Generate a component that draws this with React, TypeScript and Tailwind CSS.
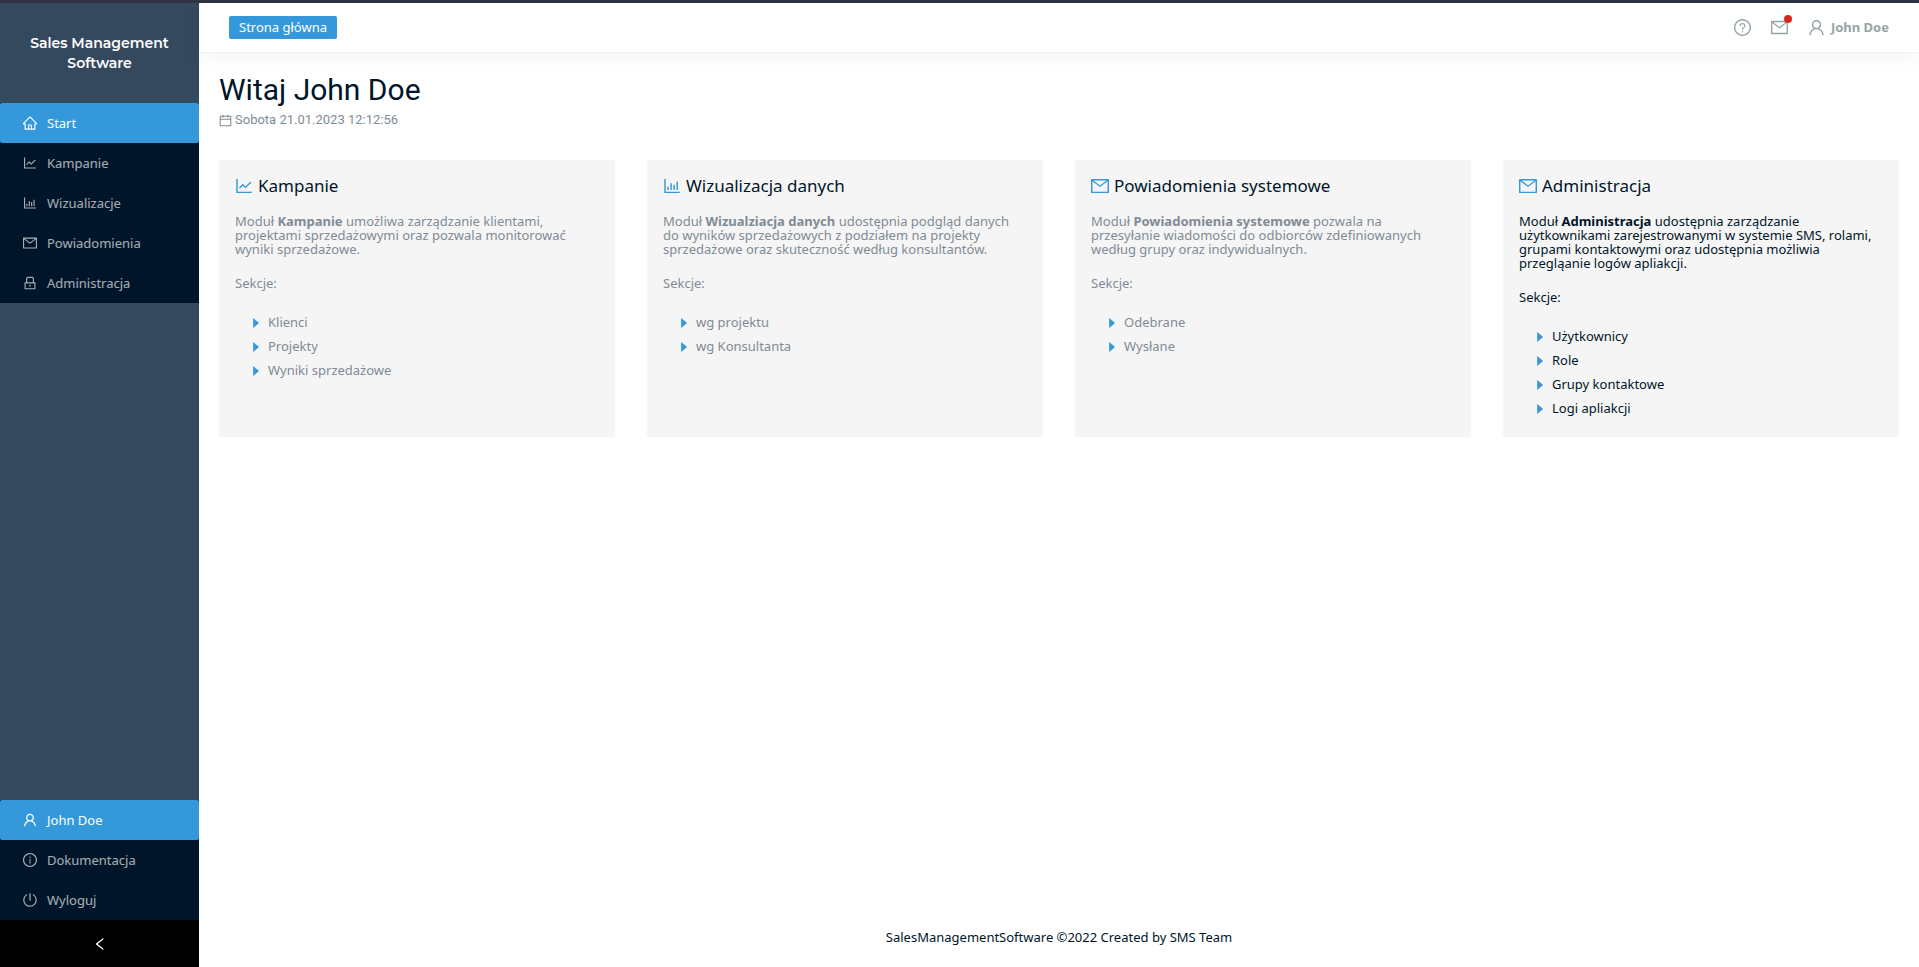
import React from "react";
import {
  AiOutlineBarChart,
  AiOutlineCalendar,
  AiOutlineHome,
  AiOutlineInfoCircle,
  AiOutlineLeft,
  AiOutlineLineChart,
  AiOutlineLock,
  AiOutlineMail,
  AiOutlinePoweroff,
  AiOutlineQuestionCircle,
  AiOutlineUser,
  AiFillCaretRight,
} from "react-icons/ai";
import type { IconType } from "react-icons";

type MenuEntry = { label: string; icon: IconType; active?: boolean };

const mainMenu: MenuEntry[] = [
  { label: "Start", icon: AiOutlineHome, active: true },
  { label: "Kampanie", icon: AiOutlineLineChart },
  { label: "Wizualizacje", icon: AiOutlineBarChart },
  { label: "Powiadomienia", icon: AiOutlineMail },
  { label: "Administracja", icon: AiOutlineLock },
];

const userMenu: MenuEntry[] = [
  { label: "John Doe", icon: AiOutlineUser, active: true },
  { label: "Dokumentacja", icon: AiOutlineInfoCircle },
  { label: "Wyloguj", icon: AiOutlinePoweroff },
];

type Module = {
  title: string;
  name: string;
  text: string;
  icon: IconType;
  sections: string[];
  dark?: boolean;
};

const modules: Module[] = [
  {
    title: "Kampanie",
    name: "Kampanie",
    text: "umożliwa zarządzanie klientami, projektami sprzedażowymi oraz pozwala monitorować wyniki sprzedażowe.",
    icon: AiOutlineLineChart,
    sections: ["Klienci", "Projekty", "Wyniki sprzedażowe"],
  },
  {
    title: "Wizualizacja danych",
    name: "Wizualziacja danych",
    text: "udostępnia podgląd danych do wyników sprzedażowych z podziałem na projekty sprzedażowe oraz skuteczność według konsultantów.",
    icon: AiOutlineBarChart,
    sections: ["wg projektu", "wg Konsultanta"],
  },
  {
    title: "Powiadomienia systemowe",
    name: "Powiadomienia systemowe",
    text: "pozwala na przesyłanie wiadomości do odbiorców zdefiniowanych według grupy oraz indywidualnych.",
    icon: AiOutlineMail,
    sections: ["Odebrane", "Wysłane"],
  },
  {
    title: "Administracja",
    name: "Administracja",
    text: "udostępnia zarządzanie użytkownikami zarejestrowanymi w systemie SMS, rolami, grupami kontaktowymi oraz udostępnia możliwia przegląanie logów apliakcji.",
    icon: AiOutlineMail,
    sections: ["Użytkownicy", "Role", "Grupy kontaktowe", "Logi apliakcji"],
    dark: true,
  },
];

/* The glyphs leave a 64-unit margin in their 1024 grid; crop it away. */
function Icon({ of: Glyph, size, className }: { of: IconType; size: number; className?: string }) {
  return <Glyph size={size} viewBox="64 64 896 896" className={className} aria-hidden="true" />;
}

function Menu({ items, label }: { items: MenuEntry[]; label: string }) {
  return (
    <nav aria-label={label} className="bg-[#001529]">
      <ul>
        {items.map((item) => (
          <li key={item.label}>
            <a
              href="#"
              className={
                item.active
                  ? "flex h-10 items-center gap-2.5 rounded-xs bg-[#3498db] pl-[23px] text-white"
                  : "flex h-10 items-center gap-2.5 pl-[23px] text-white/65"
              }
            >
              <Icon of={item.icon} size={14} />
              <span className="leading-5">{item.label}</span>
            </a>
          </li>
        ))}
      </ul>
    </nav>
  );
}

function ModuleCard({ module }: { module: Module }) {
  return (
    <section
      className={
        module.dark
          ? "rounded-xs bg-[#f5f5f5] p-4 text-[#001529]"
          : "rounded-xs bg-[#f5f5f5] p-4 text-[#808b96]"
      }
    >
      <h2 className="flex h-5 items-center gap-[5px] text-[17px] text-[#001529]">
        <Icon of={module.icon} size={18} className="text-[#3498db]" />
        {module.title}
      </h2>
      <p className="mt-[18px] pr-1 leading-[14px]">
        Moduł <strong className="font-bold">{module.name}</strong> {module.text}
      </p>
      <p className="mt-5 leading-[14px]">Sekcje:</p>
      <ul className="mt-[21px] pl-[15px]">
        {module.sections.map((s) => (
          <li key={s} className="flex h-6 items-center gap-1.5">
            <Icon of={AiFillCaretRight} size={12} className="text-[#3498db]" />
            <a href="#">{s}</a>
          </li>
        ))}
      </ul>
    </section>
  );
}

export default function App() {
  return (
    <div className="flex min-h-screen flex-col border-t-[3px] border-[#2f3342] bg-white font-['Noto_Sans','Open_Sans',sans-serif] text-[13px] text-[#001529]">
      <div className="flex flex-1">
        <aside className="flex w-[199px] shrink-0 flex-col bg-[#34495e]">
          <div className="flex h-[100px] items-center justify-center px-6 text-center font-['Montserrat','Inter',sans-serif] text-sm leading-5 font-semibold text-white">
            Sales Management Software
          </div>
          <Menu items={mainMenu} label="Menu główne" />
          <div className="mt-auto">
            <Menu items={userMenu} label="Menu użytkownika" />
            <button
              type="button"
              aria-label="Zwiń menu"
              className="flex h-[47px] w-full items-center justify-center bg-black text-white"
            >
              <Icon of={AiOutlineLeft} size={14} />
            </button>
          </div>
        </aside>

        <div className="flex min-w-0 flex-1 flex-col">
          <header className="flex h-[49px] items-center justify-between px-[30px] shadow-[0_1px_1px_rgba(0,0,0,0.03),0_8px_20px_rgba(0,0,0,0.04)]">
            <a
              href="#"
              className="flex h-[23px] items-center rounded-xs bg-[#3498db] px-2.5 text-white"
            >
              Strona główna
            </a>
            <div className="flex items-center gap-5 text-[#95a5a6]">
              <button type="button" aria-label="Pomoc">
                <Icon of={AiOutlineQuestionCircle} size={17} />
              </button>
              <button type="button" aria-label="Wiadomości" className="relative">
                <Icon of={AiOutlineMail} size={17} />
                <span className="absolute -top-1 -right-1 size-2 rounded-full bg-[#d9261c]" />
              </button>
              <button type="button" className="flex items-center gap-1.5 font-bold">
                <Icon of={AiOutlineUser} size={17} />
                John Doe
              </button>
            </div>
          </header>

          <main className="flex-1 px-5 pt-5">
            <h1 className="font-[Roboto,sans-serif] text-[30px] leading-9">Witaj John Doe</h1>
            <p className="mt-0.5 flex items-center gap-[3px] font-[Roboto,sans-serif] text-[13px] leading-5 text-[#808b96]">
              <Icon of={AiOutlineCalendar} size={13} />
              Sobota 21.01.2023 12:12:56
            </p>
            <div className="mt-[30px] grid grid-cols-4 gap-8">
              {modules.map((m) => (
                <ModuleCard key={m.title} module={m} />
              ))}
            </div>
          </main>

          <footer className="py-5 text-center leading-5">
            SalesManagementSoftware ©2022 Created by SMS Team
          </footer>
        </div>
      </div>
    </div>
  );
}
